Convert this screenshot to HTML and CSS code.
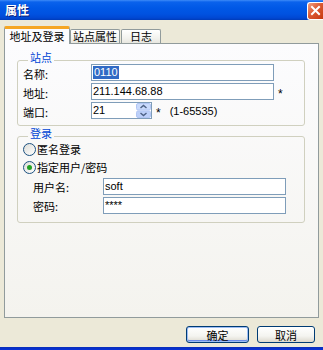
FILE: index.html
```html
<!DOCTYPE html>
<html lang="zh">
<head>
    <meta charset="UTF-8">
    <meta name="viewport" content="width=device-width, initial-scale=1.0">
    <link rel="stylesheet" href="styles.css">
</head>
<body>
    <div class="window">
        <div class="titlebar">
            <span class="title">属性</span>
            <span class="close">
                <svg width="15" height="16" viewBox="0 0 15 16">
                    <path d="M4 4 L11 11 M11 4 L4 11" stroke="#fff" stroke-width="2" stroke-linecap="square"/>
                </svg>
            </span>
        </div>

        <div class="dialog">
            <div class="tabs">
                <div class="tab active">地址及登录</div>
                <div class="tab second">站点属性</div>
                <div class="tab third">日志</div>
            </div>

            <div class="panel">
                <fieldset class="group">
                    <legend>站点</legend>
                    <div class="row">
                        <span class="label">名称:</span>
                        <div class="input"><span class="selected">0110</span></div>
                    </div>
                    <div class="row">
                        <span class="label">地址:</span>
                        <div class="input">211.144.68.88</div>
                        <span class="star">*</span>
                    </div>
                    <div class="row">
                        <span class="label">端口:</span>
                        <div class="input spinner">
                            <span class="value">21</span>
                            <span class="spin">
                                <svg width="15" height="15" viewBox="0 0 15 15">
                                    <rect x="0.5" y="0.5" width="14" height="6.5" rx="1.5" fill="#C9DAFC" stroke="#B2C6F4"/>
                                    <rect x="0.5" y="8" width="14" height="6.5" rx="1.5" fill="#BDD0F9" stroke="#B2C6F4"/>
                                    <path d="M4.5 5 L7.5 2.5 L10.5 5" fill="none" stroke="#4D6185" stroke-width="1.4"/>
                                    <path d="M4.5 10 L7.5 12.5 L10.5 10" fill="none" stroke="#4D6185" stroke-width="1.4"/>
                                </svg>
                            </span>
                        </div>
                        <span class="star">*</span>
                        <span class="range">(1-65535)</span>
                    </div>
                </fieldset>

                <fieldset class="group login">
                    <legend>登录</legend>
                    <div class="radio-row">
                        <span class="radio"></span>
                        <span>匿名登录</span>
                    </div>
                    <div class="radio-row">
                        <span class="radio checked"></span>
                        <span>指定用户/密码</span>
                    </div>
                    <div class="row sub first">
                        <span class="label">用户名:</span>
                        <div class="input">soft</div>
                    </div>
                    <div class="row sub">
                        <span class="label">密码:</span>
                        <div class="input">****</div>
                    </div>
                </fieldset>
            </div>

            <div class="buttons">
                <button class="btn default">确定</button>
                <button class="btn cancel">取消</button>
            </div>
        </div>

        <div class="frame-bottom"></div>
    </div>
</body>
</html>
```

FILE: styles.css
```css
* {
    box-sizing: border-box;
    margin: 0;
    padding: 0;
}

body {
    width: 323px;
    height: 350px;
    overflow: hidden;
    background: #ECE9D8;
    font-family: "Noto Sans CJK SC", "Liberation Sans", sans-serif;
    font-size: 11px;
    line-height: 14px;
    color: #000;
}

.window {
    display: flex;
    flex-direction: column;
    height: 350px;
}

/* title bar, xp luna style */
.titlebar {
    height: 20px;
    display: flex;
    align-items: center;
    justify-content: space-between;
    padding-left: 5px;
    background: linear-gradient(#3D8BF7 0, #0A62EC 2px, #0058E6 8px, #0052E0 14px, #0047D2 18px, #003BB8 20px);
}

.title {
    color: #fff;
    font-size: 12px;
    font-weight: bold;
    text-shadow: 1px 1px 0 #0A1E7A;
}

.close {
    width: 16px;
    height: 18px;
    margin-top: 1px;
    border: 1px solid #fff;
    border-right: none;
    border-radius: 3px 0 0 3px;
    background: linear-gradient(135deg, #EFA084 0%, #DC5A33 45%, #C6380F 100%);
    display: flex;
    align-items: center;
    justify-content: center;
}

.dialog {
    display: flex;
    flex-direction: column;
}

/* tabs */
.tabs {
    display: flex;
    align-items: flex-end;
    padding: 6px 0 0 4px;
    margin-bottom: -1px;
    position: relative;
    z-index: 1;
}

.tab {
    height: 14px;
    margin-bottom: 1px;
    border: 1px solid #919B9C;
    border-bottom: none;
    border-radius: 2px 2px 0 0;
    background: linear-gradient(#FFFFFF, #F3F3EF 60%, #E8E7E0);
    text-align: center;
    line-height: 13px;
}

.tab.active {
    width: 66px;
    height: 18px;
    margin-bottom: 0;
    border-top: 3px solid #F5A623;
    background: #FCFCFE;
    line-height: 14px;
}

.tab.second {
    width: 50px;
}

.tab.third {
    width: 40px;
    margin-left: 1px;
}

/* tab page */
.panel {
    width: 315px;
    height: 275px;
    margin-left: 4px;
    border: 1px solid #919B9C;
    background: linear-gradient(#FCFCFE, #F4F3EE);
    padding: 9px 13px 0 12px;
}

.group {
    border: 1px solid #D0D0BF;
    border-radius: 3px;
    padding: 0 5px 6px 5px;
}

.group legend {
    margin-left: 5px;
    padding: 0 2px 5px;
    margin-bottom: -3px;
    line-height: 9px;
    color: #0046D5;
}

.group.login {
    margin-top: 3px;
    padding-bottom: 8px;
}

.row {
    display: flex;
    align-items: center;
    height: 17px;
    margin-top: 2px;
}

.row:first-of-type {
    margin-top: 0;
}

.label {
    width: 68px;
    padding-top: 2px;
}

.input {
    width: 183px;
    height: 17px;
    border: 1px solid #7F9DB9;
    background: #fff;
    padding-left: 1px;
    font-family: "Liberation Sans", sans-serif;
    font-size: 11px;
    line-height: 15px;
    display: flex;
    align-items: center;
}

.selected {
    background: #316AC5;
    color: #fff;
    padding: 0 1px;
    line-height: 13px;
}

.spinner {
    width: 61px;
    justify-content: space-between;
}

.spin {
    display: flex;
}

.star {
    margin-left: 4px;
    font-family: "Liberation Sans", sans-serif;
    font-size: 12px;
    padding-top: 4px;
}

.range {
    margin-left: 9px;
    font-family: "Liberation Sans", sans-serif;
    font-size: 11px;
}

.radio-row {
    display: flex;
    align-items: center;
    gap: 1px;
    height: 18px;
}

.radio {
    width: 13px;
    height: 13px;
    border: 1px solid #1C5180;
    border-radius: 50%;
    background: linear-gradient(135deg, #DCDCD7, #FFFFFF);
    display: flex;
    align-items: center;
    justify-content: center;
}

.radio.checked::after {
    content: '';
    width: 5px;
    height: 5px;
    border-radius: 50%;
    background: #21A121;
}

.row.sub {
    padding-left: 10px;
}

.row.sub.first {
    margin-top: 2px;
}

.row.sub .label {
    width: 70px;
    padding-top: 0;
}

/* buttons */
.buttons {
    display: flex;
    justify-content: flex-end;
    gap: 8px;
    padding: 8px 8px 0 0;
}

.btn {
    height: 17px;
    border: 1px solid #003C74;
    border-radius: 3px;
    background: linear-gradient(#FFFFFF, #F4F4F0 60%, #DCD8CE);
    font-family: "Noto Sans CJK SC", sans-serif;
    font-size: 11px;
    line-height: 14px;
    color: #000;
}

.btn.default {
    width: 63px;
    box-shadow: inset 0 0 0 1px #9DBDF4, inset 0 -1px 0 1px #6A8CEA;
}

.btn.cancel {
    width: 58px;
}

.frame-bottom {
    margin-top: auto;
    height: 3px;
    background: linear-gradient(#0A2FB8, #0831D9);
}
```
